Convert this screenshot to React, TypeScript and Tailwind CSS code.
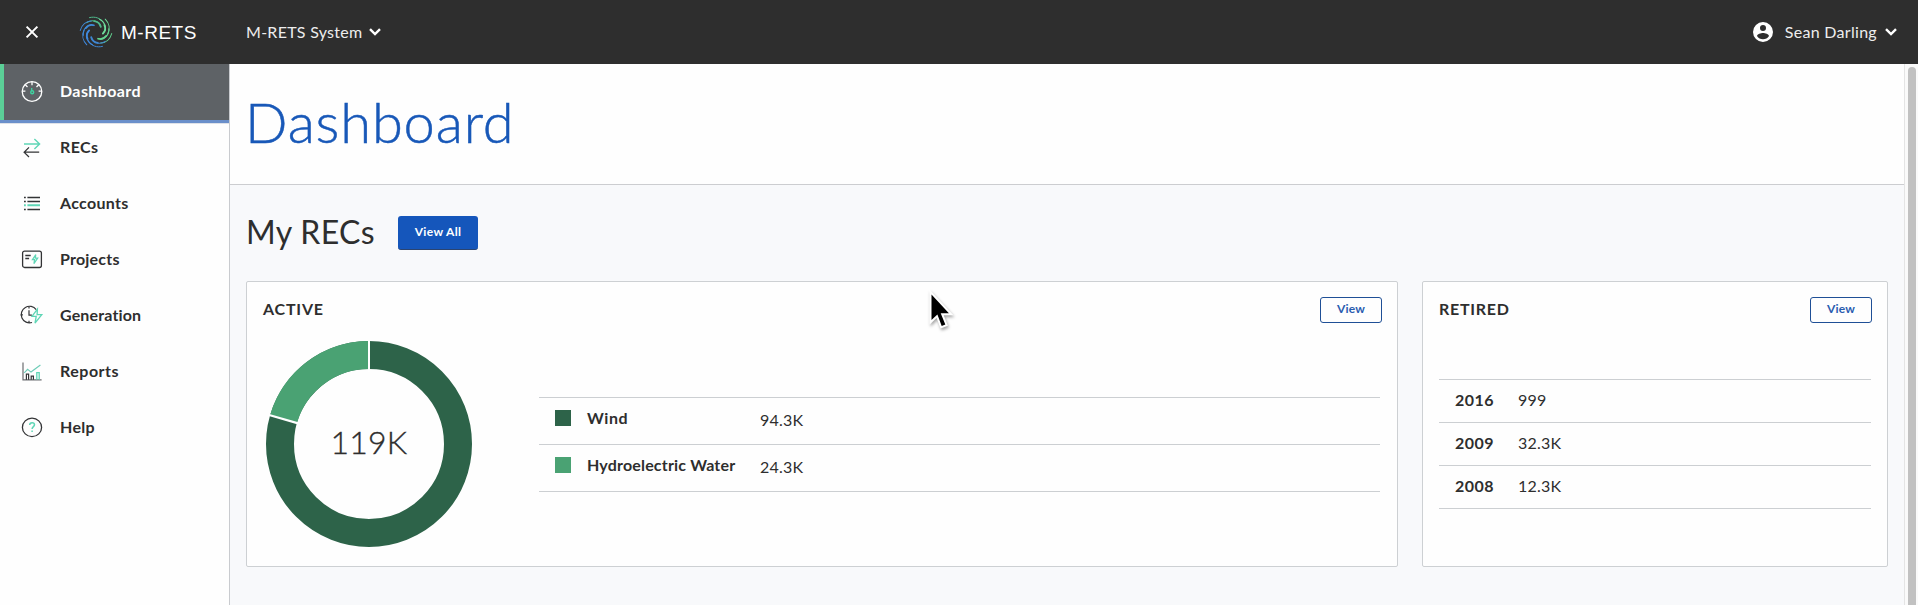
import type { ReactNode } from 'react';

const DARK = '#333436';
const MINT = '#5fd6b6';

function Logo() {
  const arms = [
    { angle: 0, color: '#4fb98c' },
    { angle: 60, color: '#6fdc9c' },
    { angle: 120, color: '#62d28f' },
    { angle: 180, color: '#3f86d2' },
    { angle: 240, color: '#3f8ae0' },
    { angle: 300, color: '#3f8ad6' },
  ];
  return (
    <svg width="34" height="34" viewBox="-17 -17 34 34" fill="none" strokeLinecap="round">
      {arms.map((a) => (
        <g key={a.angle} transform={`rotate(${a.angle})`} stroke={a.color}>
          <path d="M-9.2-9.4C-5-12.6 2.8-12 4.6-5.2" strokeWidth="1.1" />
          <path d="M-1.8-10.8C1.8-10.4 4-8.4 4.8-5.2" strokeWidth="1.8" />
          <path d="M-6.5-14.4C-1-15.8 4.5-14 7.2-9.6" strokeWidth="1" />
        </g>
      ))}
    </svg>
  );
}

function Chevron() {
  return (
    <svg width="12" height="8" viewBox="0 0 12 8" fill="none" stroke="#fff" strokeWidth="2.4">
      <path d="M1 1.2 6 6.1 11 1.2" />
    </svg>
  );
}

function GaugeIcon() {
  return (
    <svg width="22" height="22" viewBox="0 0 22 22" fill="none" stroke="#fff" strokeWidth="1.3">
      <circle cx="11" cy="10.5" r="9.8" />
      <path d="M11 .7v3.6M1.2 10.1h3.2M17.6 10.1h3.2M4.3 3.8l2.2 2.2M17.7 3.8l-2.2 2.2" />
      <path d="M10.7 7.1v3" stroke="#3fd2a0" />
      <circle cx="11.2" cy="11.3" r="1.5" stroke="#3fd2a0" strokeWidth="1.4" />
    </svg>
  );
}

function TransferIcon() {
  return (
    <svg width="22" height="22" viewBox="0 0 22 22" fill="none" strokeWidth="1.2">
      <path d="M3 7h15.5M13.4 2l5.2 5-5.2 5" stroke={MINT} strokeWidth="1.4" />
      <path d="M18.2 15.2H3.2M8 10.4l-4.9 4.8L8 20" stroke={DARK} />
    </svg>
  );
}

function ListIcon() {
  return (
    <svg width="22" height="22" viewBox="0 0 22 22" fill="none" stroke={DARK} strokeWidth="1.3">
      <path d="M3 4.5h1.8M6.4 4.5H19M3 8.5h1.8M6.4 8.5H19M3 16.5h1.8M6.4 16.5H19" />
      <path d="M3 12.3h1.8M6.4 12.3H19" stroke={MINT} strokeWidth="2" />
    </svg>
  );
}

function ProjectIcon() {
  return (
    <svg width="22" height="22" viewBox="0 0 22 22" fill="none" stroke={DARK} strokeWidth="1.3">
      <rect x="1.6" y="2.1" width="18.8" height="16.4" rx="2" />
      <path d="M4.3 6.5h5.4M4.3 9.5h3.8" />
      <path d="M14.8 5.6l-3.4 5h2.2l-.7 4 3.8-5.4h-2.4z" stroke={MINT} strokeWidth="1.2" />
    </svg>
  );
}

function GenerationIcon() {
  return (
    <svg width="22" height="22" viewBox="0 0 22 22" fill="none" stroke={DARK} strokeWidth="1.2" overflow="visible">
      <path d="M15.2 4.6A8.3 8.3 0 1 0 11 17.5" />
      <path d="M8 1.6v2M-.3 9.8h2.2M8 18v-2.2M8 5.2v4.9h2.9" />
      <path d="M16.4 4.2l-5.4 7.2h4.2l-1.2 6.8 6.8-8.6h-4.7z" stroke={MINT} strokeWidth="1.3" />
    </svg>
  );
}

function ReportIcon() {
  return (
    <svg width="22" height="22" viewBox="0 0 22 22" fill="none" stroke={DARK} strokeWidth="1.2">
      <path d="M2 1.6v17.3h18.6" stroke="#6b6d70" />
      <path d="M5.4 18.8v-5.6h2.2v5.6M10.2 18.8v-3.6h2.2v3.6" />
      <path d="M15.8 18.8v-7.2h2.4v7.2" stroke={MINT} strokeWidth="1.3" />
      <path d="M3.2 11.8 6.6 8.3l3.4 2.8L19.4 3.9" stroke="#6fcdb8" strokeWidth="1.2" />
    </svg>
  );
}

function HelpIcon() {
  return (
    <svg width="22" height="22" viewBox="0 0 22 22" fill="none" stroke={DARK} strokeWidth="1.3">
      <ellipse cx="11" cy="10.4" rx="9.6" ry="9.2" />
      <path d="M8.7 8c0-3.2 4.8-3 4.8-.2 0 1.9-2.4 1.9-2.4 4.2M11.1 13.4V15" stroke={MINT} strokeWidth="1.5" />
    </svg>
  );
}

const nav: { label: string; icon: ReactNode; spacing: string }[] = [
  { label: 'RECs', icon: <TransferIcon />, spacing: 'tracking-[0.4px]' },
  { label: 'Accounts', icon: <ListIcon />, spacing: 'tracking-[0.3px]' },
  { label: 'Projects', icon: <ProjectIcon />, spacing: 'tracking-[0.2px]' },
  { label: 'Generation', icon: <GenerationIcon />, spacing: 'tracking-[0.15px]' },
  { label: 'Reports', icon: <ReportIcon />, spacing: 'tracking-[0.5px]' },
  { label: 'Help', icon: <HelpIcon />, spacing: 'tracking-[0.3px]' },
];

function Header() {
  return (
    <header className="flex h-16 shrink-0 items-center bg-[#2e2e2e] text-white">
      <svg className="ml-[25px]" width="14" height="14" viewBox="0 0 14 14" fill="none" stroke="#fff" strokeWidth="2">
        <path d="M1.6 1.6l10.8 10.8M12.4 1.6 1.6 12.4" />
      </svg>
      <div className="ml-[40px] flex w-[167px] items-center gap-2">
        <Logo />
        <span className="pt-[2px] font-['Liberation_Sans',sans-serif] text-[19px] leading-6 tracking-[0.5px]">M-RETS</span>
      </div>
      <button className="flex items-center gap-[7px] text-[#ededed]">
        <span className="pb-px text-base tracking-[0.27px]">M-RETS System</span>
        <Chevron />
      </button>
      <button className="mr-[21px] ml-auto flex items-center text-[#ededed]">
        <svg width="20" height="20" viewBox="2 2 20 20" fill="#fff">
          <path d="M12 2a10 10 0 1 0 0 20 10 10 0 0 0 0-20zm0 3a3 3 0 1 1 0 6 3 3 0 0 1 0-6zm0 14.2a7.2 7.2 0 0 1-6-3.2c.03-2 4-3.1 6-3.1s5.97 1.1 6 3.1a7.2 7.2 0 0 1-6 3.2z" />
        </svg>
        <span className="mr-2 ml-3 pb-px text-base tracking-[0.3px]">Sean Darling</span>
        <Chevron />
      </button>
    </header>
  );
}

function Sidebar() {
  return (
    <nav className="w-[230px] shrink-0 border-r border-[#c9cbcf] bg-[#fefefe] text-base font-bold text-[#2e2e2e]">
      <div className="flex h-14 items-center border-l-4 border-[#5bcf97] bg-[#5e6266] pl-[17px] text-white">
        <GaugeIcon />
        <span className="ml-[17px] pb-[2px] tracking-[0.4px]">Dashboard</span>
      </div>
      <div className="-mb-1 h-1 border-b border-[#dfe2e8] bg-[#6a8fca]" />
      {nav.map((n) => (
        <div key={n.label} className="flex h-14 items-center pl-[21px]">
          {n.icon}
          <span className={`ml-[17px] pb-[2px] ${n.spacing}`}>{n.label}</span>
        </div>
      ))}
    </nav>
  );
}

function ViewButton() {
  return (
    <button className="h-[26px] w-[62px] rounded-[3px] border border-[#1f4f96] bg-[#fefefe] pb-0.5 text-xs leading-none font-bold tracking-[0.2px] text-[#2a5db0]">
      View
    </button>
  );
}

function Donut() {
  return (
    <div className="grid h-[208px] w-[208px] place-items-center">
      <svg className="col-start-1 row-start-1" width="208" height="208" viewBox="-104 -104 208 208">
        <circle r="89" fill="none" stroke="#2d6349" strokeWidth="28" />
        <circle
          r="89"
          fill="none"
          stroke="#4aa273"
          strokeWidth="28"
          pathLength="360"
          strokeDasharray="73.8 286.2"
          transform="rotate(-163.8)"
        />
        <path d="M0-72V-104" stroke="#fff" strokeWidth="2" />
        <path d="M0-72V-104" stroke="#fff" strokeWidth="2.2" transform="rotate(-73.8)" />
      </svg>
      <span className="col-start-1 row-start-1 pb-[5px] text-[32px] leading-none font-light tracking-[0.2px] [-webkit-text-stroke:0.35px_#2e2e2e]">
        119K
      </span>
    </div>
  );
}

const sources = [
  { name: 'Wind', value: '94.3K', swatch: 'bg-[#2d6349]', spacing: 'tracking-[0.6px]' },
  { name: 'Hydroelectric Water', value: '24.3K', swatch: 'bg-[#4aa273]', spacing: 'tracking-[0.18px]' },
];

const retired = [
  { year: '2016', value: '999' },
  { year: '2009', value: '32.3K' },
  { year: '2008', value: '12.3K' },
];

function ActiveCard() {
  return (
    <section className="flex h-[286px] w-[1152px] flex-col rounded-[2px] border border-[#cdd0d3] bg-[#fefefe] pt-[15px] pr-[15px] pl-4">
      <div className="flex h-[26px] items-center justify-between">
        <h3 className="pb-[2px] text-base leading-none font-bold tracking-[0.8px]">ACTIVE</h3>
        <ViewButton />
      </div>
      <div className="mt-[17px] flex h-[208px] items-center pl-[2px]">
        <Donut />
        <div className="ml-[66px] w-[841px] border-t border-[#cccfd2]">
          {sources.map((s) => (
            <div key={s.name} className="flex h-[47px] items-center border-b border-[#cccfd2] pl-4">
              <span className={`mb-[5px] size-4 ${s.swatch}`} />
              <span className={`mb-[5px] ml-4 w-[173px] font-bold ${s.spacing}`}>{s.name}</span>
              <span className="mb-px tracking-[0.2px]">{s.value}</span>
            </div>
          ))}
        </div>
      </div>
    </section>
  );
}

function RetiredCard() {
  return (
    <section className="h-[286px] w-[466px] rounded-[2px] border border-[#cdd0d3] bg-[#fefefe] pt-[15px] pr-[15px] pl-4">
      <div className="flex h-[26px] items-center justify-between">
        <h3 className="pb-[2px] text-base leading-none font-bold tracking-[0.75px]">RETIRED</h3>
        <ViewButton />
      </div>
      <div className="mt-14 w-[432px] border-t border-[#cccfd2]">
        {retired.map((r) => (
          <div key={r.year} className="flex h-[43px] items-center border-b border-[#cccfd2] pb-[2px] pl-4">
            <span className="w-[63px] font-bold tracking-[0.5px]">{r.year}</span>
            <span className="tracking-[0.2px]">{r.value}</span>
          </div>
        ))}
      </div>
    </section>
  );
}

export default function App() {
  return (
    <div className="flex h-[605px] w-[1918px] flex-col overflow-hidden bg-[#fefefe] font-[Lato,sans-serif] text-base text-[#2e2e2e]">
      <Header />
      <div className="flex min-h-0 flex-1">
        <Sidebar />
        <main className="w-[1674px] bg-[#f8f9fb]">
          <div className="flex h-[121px] items-center border-b border-[#cccdd0] bg-[#fefefe] pb-[5px] pl-[15px]">
            <h1 className="text-[56px] leading-none font-light tracking-[0.85px] text-[#1858b8] [-webkit-text-stroke:0.5px_#1858b8]">
              Dashboard
            </h1>
          </div>
          <div className="flex h-24 items-center pl-4">
            <h2 className="mb-[3px] w-[152px] text-[32px] leading-none tracking-[0.35px]">My RECs</h2>
            <button className="h-[34px] w-20 rounded-[3px] border-b border-[#2b4470] bg-[#1556bb] pb-0.5 text-xs leading-none font-bold tracking-[0.35px] text-white">
              View All
            </button>
          </div>
          <div className="flex gap-6 pl-4">
            <ActiveCard />
            <RetiredCard />
          </div>
        </main>
        <div className="flex flex-1 border-l border-[#e4e4e4] bg-[#fafafa] pt-[3px] pl-[3px]">
          <div className="w-2 rounded-t-full bg-[#c1c1c1]" />
        </div>
      </div>
      <svg className="absolute top-[285px] left-[924px] drop-shadow-[1px_2px_1.5px_rgba(0,0,0,0.35)]" width="32" height="48" viewBox="924 285 32 48">
        <path
          d="M931.5 294.5V320l5.9-5.6 4.3 11.6 3.6-1.4-4.6-11.3h8.2z"
          fill="#000"
          stroke="#fff"
          strokeWidth="4"
          paintOrder="stroke"
        />
      </svg>
    </div>
  );
}
